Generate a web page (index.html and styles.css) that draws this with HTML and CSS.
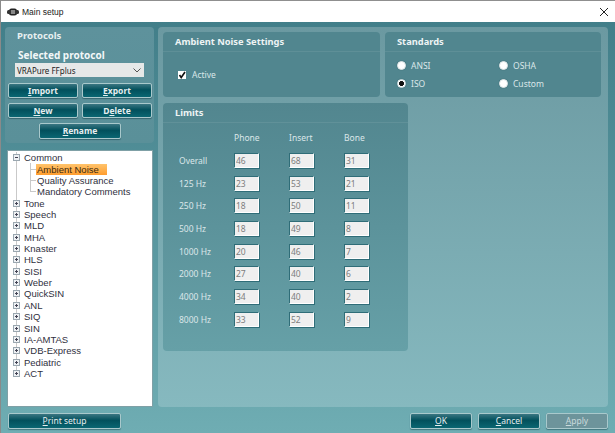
FILE: index.html
```html
<!DOCTYPE html>
<html lang="en">
<head>
    <meta charset="UTF-8">
    <title>Main setup</title>
    <link rel="stylesheet" href="styles.css">
</head>
<body>
    <div class="window">
        <div class="titlebar">
            <svg class="app-icon" width="12" height="8" viewBox="0 0 12 8">
                <rect x="2" y="0.5" width="8" height="7" rx="2.5" fill="#222"/>
                <rect x="0" y="2" width="12" height="4" rx="1.5" fill="#333"/>
                <rect x="4" y="2.5" width="4" height="1" fill="#ddd"/>
                <rect x="4" y="4.5" width="4" height="1" fill="#ddd"/>
            </svg>
            <span class="title">Main setup</span>
            <svg class="close" width="10" height="10" viewBox="0 0 10 10">
                <path d="M1 1 L9 9 M9 1 L1 9" stroke="#222" stroke-width="1" fill="none"/>
            </svg>
        </div>

        <div class="main">
            <div class="left">
                <div class="protocols">
                    <div class="protocols-head">Protocols</div>
                    <div class="selected-label">Selected protocol</div>
                    <div class="select">
                        <span>VRAPure FFplus</span>
                        <svg width="8" height="5" viewBox="0 0 8 5"><path d="M0.5 0.5 L4 4 L7.5 0.5" stroke="#555" fill="none"/></svg>
                    </div>
                    <div class="protocol-buttons">
                        <button class="button bold"><u>I</u>mport</button>
                        <button class="button bold"><u>E</u>xport</button>
                        <button class="button bold"><u>N</u>ew</button>
                        <button class="button bold">D<u>e</u>lete</button>
                        <button class="button bold rename"><u>R</u>ename</button>
                    </div>
                </div>

                <div class="tree">
                    <div class="row root"><svg class="twist" width="7" height="7" viewBox="0 0 7 7"><rect x="0.5" y="0.5" width="6" height="6" fill="#eef1f4" stroke="#9aa7b0"/><path d="M2 3.5 H5" stroke="#445"/></svg><span>Common</span></div>
                    <div class="row child"><span class="selected">Ambient Noise</span></div>
                    <div class="row child"><span>Quality Assurance</span></div>
                    <div class="row child last"><span>Mandatory Comments</span></div>
                    <div class="row root"><svg class="twist" width="7" height="7" viewBox="0 0 7 7"><rect x="0.5" y="0.5" width="6" height="6" fill="#eef1f4" stroke="#9aa7b0"/><path d="M2 3.5 H5 M3.5 2 V5" stroke="#445"/></svg><span>Tone</span></div>
                    <div class="row root"><svg class="twist" width="7" height="7" viewBox="0 0 7 7"><rect x="0.5" y="0.5" width="6" height="6" fill="#eef1f4" stroke="#9aa7b0"/><path d="M2 3.5 H5 M3.5 2 V5" stroke="#445"/></svg><span>Speech</span></div>
                    <div class="row root"><svg class="twist" width="7" height="7" viewBox="0 0 7 7"><rect x="0.5" y="0.5" width="6" height="6" fill="#eef1f4" stroke="#9aa7b0"/><path d="M2 3.5 H5 M3.5 2 V5" stroke="#445"/></svg><span>MLD</span></div>
                    <div class="row root"><svg class="twist" width="7" height="7" viewBox="0 0 7 7"><rect x="0.5" y="0.5" width="6" height="6" fill="#eef1f4" stroke="#9aa7b0"/><path d="M2 3.5 H5 M3.5 2 V5" stroke="#445"/></svg><span>MHA</span></div>
                    <div class="row root"><svg class="twist" width="7" height="7" viewBox="0 0 7 7"><rect x="0.5" y="0.5" width="6" height="6" fill="#eef1f4" stroke="#9aa7b0"/><path d="M2 3.5 H5 M3.5 2 V5" stroke="#445"/></svg><span>Knaster</span></div>
                    <div class="row root"><svg class="twist" width="7" height="7" viewBox="0 0 7 7"><rect x="0.5" y="0.5" width="6" height="6" fill="#eef1f4" stroke="#9aa7b0"/><path d="M2 3.5 H5 M3.5 2 V5" stroke="#445"/></svg><span>HLS</span></div>
                    <div class="row root"><svg class="twist" width="7" height="7" viewBox="0 0 7 7"><rect x="0.5" y="0.5" width="6" height="6" fill="#eef1f4" stroke="#9aa7b0"/><path d="M2 3.5 H5 M3.5 2 V5" stroke="#445"/></svg><span>SISI</span></div>
                    <div class="row root"><svg class="twist" width="7" height="7" viewBox="0 0 7 7"><rect x="0.5" y="0.5" width="6" height="6" fill="#eef1f4" stroke="#9aa7b0"/><path d="M2 3.5 H5 M3.5 2 V5" stroke="#445"/></svg><span>Weber</span></div>
                    <div class="row root"><svg class="twist" width="7" height="7" viewBox="0 0 7 7"><rect x="0.5" y="0.5" width="6" height="6" fill="#eef1f4" stroke="#9aa7b0"/><path d="M2 3.5 H5 M3.5 2 V5" stroke="#445"/></svg><span>QuickSIN</span></div>
                    <div class="row root"><svg class="twist" width="7" height="7" viewBox="0 0 7 7"><rect x="0.5" y="0.5" width="6" height="6" fill="#eef1f4" stroke="#9aa7b0"/><path d="M2 3.5 H5 M3.5 2 V5" stroke="#445"/></svg><span>ANL</span></div>
                    <div class="row root"><svg class="twist" width="7" height="7" viewBox="0 0 7 7"><rect x="0.5" y="0.5" width="6" height="6" fill="#eef1f4" stroke="#9aa7b0"/><path d="M2 3.5 H5 M3.5 2 V5" stroke="#445"/></svg><span>SIQ</span></div>
                    <div class="row root"><svg class="twist" width="7" height="7" viewBox="0 0 7 7"><rect x="0.5" y="0.5" width="6" height="6" fill="#eef1f4" stroke="#9aa7b0"/><path d="M2 3.5 H5 M3.5 2 V5" stroke="#445"/></svg><span>SIN</span></div>
                    <div class="row root"><svg class="twist" width="7" height="7" viewBox="0 0 7 7"><rect x="0.5" y="0.5" width="6" height="6" fill="#eef1f4" stroke="#9aa7b0"/><path d="M2 3.5 H5 M3.5 2 V5" stroke="#445"/></svg><span>IA-AMTAS</span></div>
                    <div class="row root"><svg class="twist" width="7" height="7" viewBox="0 0 7 7"><rect x="0.5" y="0.5" width="6" height="6" fill="#eef1f4" stroke="#9aa7b0"/><path d="M2 3.5 H5 M3.5 2 V5" stroke="#445"/></svg><span>VDB-Express</span></div>
                    <div class="row root"><svg class="twist" width="7" height="7" viewBox="0 0 7 7"><rect x="0.5" y="0.5" width="6" height="6" fill="#eef1f4" stroke="#9aa7b0"/><path d="M2 3.5 H5 M3.5 2 V5" stroke="#445"/></svg><span>Pediatric</span></div>
                    <div class="row root end"><svg class="twist" width="7" height="7" viewBox="0 0 7 7"><rect x="0.5" y="0.5" width="6" height="6" fill="#eef1f4" stroke="#9aa7b0"/><path d="M2 3.5 H5 M3.5 2 V5" stroke="#445"/></svg><span>ACT</span></div>
                </div>
            </div>

            <div class="content">
                <div class="top-row">
                    <div class="panel">
                        <div class="panel-head">Ambient Noise Settings</div>
                        <label class="active-row">
                            <span class="checkbox">
                                <svg width="8" height="8" viewBox="0 0 8 8"><path d="M1.5 4 L3.2 6.5 L7 1" stroke="#111" stroke-width="1.6" fill="none"/></svg>
                            </span>
                            Active
                        </label>
                    </div>
                    <div class="panel">
                        <div class="panel-head">Standards</div>
                        <div class="radios">
                            <div class="radio-item"><span class="radio"></span>ANSI</div>
                            <div class="radio-item"><span class="radio"></span>OSHA</div>
                            <div class="radio-item"><span class="radio on"></span>ISO</div>
                            <div class="radio-item"><span class="radio"></span>Custom</div>
                        </div>
                    </div>
                </div>

                <div class="panel limits">
                    <div class="panel-head">Limits</div>
                    <div class="limits-grid">
                        <span></span><span class="col-head">Phone</span><span class="col-head">Insert</span><span class="col-head">Bone</span>
                        <span>Overall</span><input class="field" value="46" disabled><input class="field" value="68" disabled><input class="field" value="31" disabled>
                        <span>125 Hz</span><input class="field" value="23" disabled><input class="field" value="53" disabled><input class="field" value="21" disabled>
                        <span>250 Hz</span><input class="field" value="18" disabled><input class="field" value="50" disabled><input class="field" value="11" disabled>
                        <span>500 Hz</span><input class="field" value="18" disabled><input class="field" value="49" disabled><input class="field" value="8" disabled>
                        <span>1000 Hz</span><input class="field" value="20" disabled><input class="field" value="46" disabled><input class="field" value="7" disabled>
                        <span>2000 Hz</span><input class="field" value="27" disabled><input class="field" value="40" disabled><input class="field" value="6" disabled>
                        <span>4000 Hz</span><input class="field" value="34" disabled><input class="field" value="40" disabled><input class="field" value="2" disabled>
                        <span>8000 Hz</span><input class="field" value="33" disabled><input class="field" value="52" disabled><input class="field" value="9" disabled>
                    </div>
                </div>
            </div>
        </div>

        <div class="footer">
            <button class="button print"><u>P</u>rint setup</button>
            <div class="footer-right">
                <button class="button wide"><u>O</u>K</button>
                <button class="button wide"><u>C</u>ancel</button>
                <button class="button wide off"><u>A</u>pply</button>
            </div>
        </div>
    </div>
</body>
</html>
```

FILE: styles.css
```css
* {
    box-sizing: border-box;
}
body {
    margin: 0;
    width: 615px;
    height: 433px;
    overflow: hidden;
    font-family: 'Noto Sans', Verdana, sans-serif;
    font-size: 9px;
}
.window {
    height: 433px;
    display: flex;
    flex-direction: column;
    background: linear-gradient(#3f7c87, #6fadb3);
    border-left: 1px solid #8a8a8a;
}
.titlebar {
    height: 22px;
    flex: none;
    display: flex;
    align-items: center;
    background-color: #fff;
    border-top: 1px solid #8f8f8f;
    padding: 0 6px 0 6px;
}
.app-icon {
    margin-right: 3px;
}
.title {
    font-family: 'Liberation Sans', Arial, sans-serif;
    font-size: 8.5px;
    color: #222;
    flex: 1;
}
.main {
    flex: 1;
    display: flex;
    gap: 4px;
    padding: 5px 6px 0 4px;
    min-height: 0;
}
.left {
    width: 149px;
    display: flex;
    flex-direction: column;
    gap: 7px;
}
.protocols {
    height: 116px;
    background: linear-gradient(#5e929c, #5a9099);
    border-radius: 4px;
    color: #f2f7f8;
}
.protocols-head {
    padding: 3px 0 0 12px;
    font-size: 9.5px;
    line-height: 12px;
    font-weight: bold;
    height: 20px;
    color: #e8f0f1;
}
.selected-label {
    padding-left: 13px;
    font-size: 10px;
    font-weight: bold;
    height: 15px;
    line-height: 15px;
    margin-top: 1px;
}
.select {
    margin: 0 10px;
    height: 14px;
    display: flex;
    align-items: center;
    justify-content: space-between;
    padding: 0 3px 0 2px;
    background-color: #e6e8e8;
    color: #222;
    font-size: 8px;
}
.protocol-buttons {
    display: grid;
    grid-template-columns: 70px 70px;
    column-gap: 4px;
    row-gap: 5px;
    padding: 6px 0 0 3px;
}
.button {
    height: 15px;
    padding: 0;
    border: 1px solid #a9c9cc;
    border-radius: 2px;
    background: linear-gradient(#3a7682, #02505c 45%, #0a6672);
    color: #e6eef0;
    font-family: 'Noto Sans', Verdana, sans-serif;
    font-size: 8.5px;
    line-height: 12px;
    box-shadow: 0 1px 1px rgba(0, 40, 50, 0.4);
}
.button.bold {
    font-weight: bold;
}
.button.rename {
    grid-column: span 2;
    width: 82px;
    justify-self: center;
    height: 16px;
}
.tree {
    flex: 1;
    margin: 0 1px 0 2px;
    padding: 1px 0 0 0;
    background-color: #fff;
    border: 1px solid #7fa0a6;
    color: #2f3040;
    font-family: 'Liberation Sans', Arial, sans-serif;
    font-size: 9.5px;
    overflow: hidden;
}
.row {
    height: 11.37px;
    display: flex;
    align-items: center;
    white-space: nowrap;
    line-height: 11px;
    background: linear-gradient(#c9c9c9, #c9c9c9) 8px 0 / 1px 100% no-repeat;
}
.row.end {
    background-size: 1px 50%;
}
.row.root {
    padding-left: 5px;
}
.twist {
    flex: none;
    margin-right: 4px;
}
.row.child {
    padding-left: 29px;
    background:
        linear-gradient(#c9c9c9, #c9c9c9) 8px 0 / 1px 100% no-repeat,
        linear-gradient(#c9c9c9, #c9c9c9) 22px 0 / 1px 100% no-repeat,
        linear-gradient(#c9c9c9, #c9c9c9) 22px 50% / 6px 1px no-repeat;
}
.row.child.last {
    background:
        linear-gradient(#c9c9c9, #c9c9c9) 8px 0 / 1px 100% no-repeat,
        linear-gradient(#c9c9c9, #c9c9c9) 22px 0 / 1px 50% no-repeat,
        linear-gradient(#c9c9c9, #c9c9c9) 22px 50% / 6px 1px no-repeat;
}
.selected {
    background: linear-gradient(#ffc36b, #ff9d2e);
    padding: 0 8px 0 1px;
    margin-left: -1px;
    color: #3a2a10;
}
.content {
    width: 450px;
    height: 380px;
    padding: 5px;
    background: linear-gradient(#6b99a1, #86b9bf);
    border-radius: 4px;
}
.top-row {
    display: grid;
    grid-template-columns: 217px 216px;
    column-gap: 5px;
    margin-bottom: 6px;
}
.panel {
    height: 65px;
    background-color: #51868f;
    border-radius: 4px;
    color: #dbe7e9;
}
.panel-head {
    height: 20px;
    padding: 4px 0 0 12px;
    border-bottom: 1px solid rgba(255, 255, 255, 0.08);
    font-size: 9.3px;
    line-height: 12px;
    font-weight: bold;
    color: #eef4f5;
}
.active-row {
    display: flex;
    align-items: center;
    gap: 6px;
    padding: 17px 0 0 15px;
    font-size: 8.5px;
    line-height: 11px;
}
.checkbox {
    width: 8px;
    height: 8px;
    background-color: #fff;
    display: flex;
}
.radios {
    display: grid;
    grid-template-columns: 102px 100px;
    grid-auto-rows: 18px;
    padding: 4px 0 0 12px;
}
.radio-item {
    display: flex;
    align-items: center;
    gap: 5px;
    font-size: 8.5px;
}
.radio {
    width: 9px;
    height: 9px;
    border-radius: 50%;
    background-color: #fff;
    border: 1px solid #dfe8e9;
    box-shadow: 0 0 1px #2b5a63;
}
.radio.on {
    background: radial-gradient(circle, #111 0 2.2px, #fff 2.8px);
}
.limits {
    width: 245px;
    height: 248px;
    background: linear-gradient(#52868f, #66a0a7);
}
.limits-grid {
    display: grid;
    grid-template-columns: 55px 55px 55px 25px;
    grid-auto-rows: 22.7px;
    align-items: center;
    padding: 3.5px 0 0 16px;
    font-size: 8.5px;
    line-height: 11px;
}
.col-head {
    text-align: left;
}
.field {
    width: 25px;
    height: 15px;
    padding: 0 0 0 1px;
    border: none;
    border-top: 1px solid #2f6d78;
    border-left: 1px solid #2f6d78;
    border-right: 1px solid #fff;
    border-bottom: 1px solid #fff;
    box-shadow: 1px 1px 0 #2f6d78;
    background-color: #efefef;
    color: #7d7d7d;
    -webkit-text-fill-color: #7d7d7d;
    opacity: 1;
    font-family: 'Noto Sans', Verdana, sans-serif;
    font-size: 8.5px;
}
.footer {
    flex: none;
    display: flex;
    justify-content: space-between;
    padding: 6px 7px 4px 7px;
}
.button.print {
    width: 113px;
    height: 16px;
    font-weight: normal;
}
.footer-right {
    display: flex;
    gap: 6px;
}
.button.wide {
    width: 62px;
    height: 16px;
}
.button.off {
    background: #6d949b;
    color: #c9dadc;
}
```
